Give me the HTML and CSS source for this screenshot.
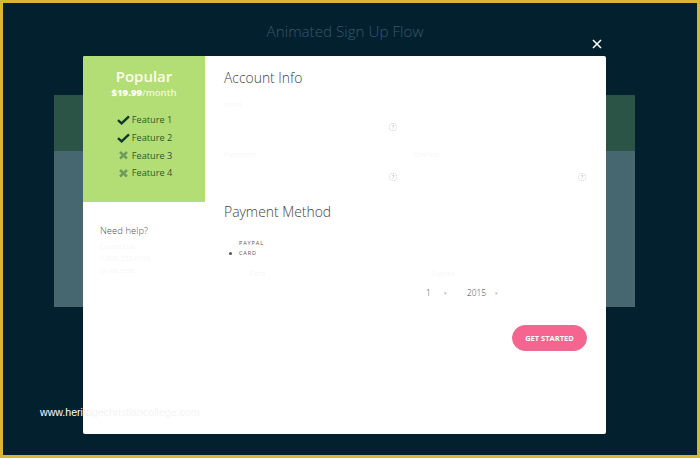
FILE: index.html
```html
<!DOCTYPE html>
<html lang="en">
<head>
<meta charset="utf-8">
<title>Animated Sign Up Flow</title>
<link rel="stylesheet" href="styles.css">
</head>
<body>
<div class="frame">
  <h1 class="page-title">Animated Sign Up Flow</h1>
  <div class="backdrop-card">
    <div class="backdrop-band"></div>
  </div>
  <button class="close" aria-label="Close">
    <svg width="10" height="10" viewBox="0 0 10 10"><path d="M1 1L9 9M9 1L1 9" stroke="#fff" stroke-width="1.6" fill="none"/></svg>
  </button>
  <div class="modal">
    <aside class="side">
      <div class="plan">
        <div class="plan-name">Popular</div>
        <div class="plan-price"><b>$19.99</b>/month</div>
        <ul class="features">
          <li class="feature"><svg class="ico" width="13" height="10" viewBox="0 0 13 10"><path d="M1 5.2L4.6 8.4L12 1.4" stroke="#0f3a2a" stroke-width="2.4" fill="none"/></svg>Feature 1</li>
          <li class="feature"><svg class="ico" width="13" height="10" viewBox="0 0 13 10"><path d="M1 5.2L4.6 8.4L12 1.4" stroke="#0f3a2a" stroke-width="2.4" fill="none"/></svg>Feature 2</li>
          <li class="feature"><svg class="ico" width="13" height="10" viewBox="0 0 13 10"><path d="M3 2L10 8.500M10 2L3 8.500" stroke="#6f9a5c" stroke-width="2.400" fill="none"/></svg>Feature 3</li>
          <li class="feature"><svg class="ico" width="13" height="10" viewBox="0 0 13 10"><path d="M3 2L10 8.500M10 2L3 8.500" stroke="#6f9a5c" stroke-width="2.400" fill="none"/></svg>Feature 4</li>
        </ul>
      </div>
      <div class="help">
        <div class="help-title">Need help?</div>
        <div class="help-lines">
          <div class="help-line">Contact us</div>
          <div class="help-line">1-800-555-0199</div>
          <div class="help-line">or via chat</div>
        </div>
      </div>
    </aside>
    <main class="content">
      <h2 class="section-title">Account Info</h2>
      <div class="fields">
        <div class="row">
          <div class="field"><span class="faint">Email</span><span class="hint">?</span></div>
        </div>
        <div class="row">
          <div class="field"><span class="faint">Password</span><span class="hint">?</span></div>
          <div class="field"><span class="faint">Confirm</span><span class="hint">?</span></div>
        </div>
      </div>
      <h2 class="section-title payment">Payment Method</h2>
      <div class="radios">
        <div class="radio"><span class="dot off"></span>PAYPAL</div>
        <div class="radio"><span class="dot"></span>CARD</div>
      </div>
      <div class="card-row">
        <div class="card-col"><span class="faint">Card</span></div>
        <div class="card-col">
          <span class="faint">Expires</span>
          <div class="selects"><span class="sel sel-month">1<i class="caret">▾</i></span><span class="sel sel-year">2015<i class="caret">▾</i></span></div>
        </div>
      </div>
      <div class="actions"><button class="cta">GET STARTED</button></div>
    </main>
  </div>
  <div class="watermark"><span class="wm-dark">www.heri</span><span class="wm-light">tagechristiancollege.com</span></div>
</div>
</body>
</html>
```
FILE: styles.css
```css
* { box-sizing: border-box; }
html, body { margin: 0; height: 100%; }
body { font-family: "Open Sans", sans-serif; }
.frame {
  position: relative;
  width: 700px;
  height: 458px;
  border: 3px solid #d6b833;
  background: #03202f;
  overflow: hidden;
}
.page-title {
  margin: 18px 0 0;
  text-align: center;
  font-size: 15.200px;
  line-height: 20px;
  font-weight: 300;
  color: #35596a;
  padding-right: 10px;
}
.backdrop-card {
  position: absolute;
  left: 51px;
  top: 92px;
  width: 581px;
  height: 212px;
  background: #466670;
}
.backdrop-band { height: 56px; background: #2b5446; }
.close {
  position: absolute;
  left: 589px;
  top: 36px;
  width: 10px;
  height: 10px;
  padding: 0;
  border: 0;
  background: none;
  display: flex;
}
.modal {
  position: absolute;
  left: 80px;
  top: 53px;
  width: 523px;
  height: 378px;
  background: #fff;
  border-radius: 2px;
  display: flex;
  overflow: hidden;
}
.side { width: 122px; flex: none; }
.plan {
  height: 146px;
  background: #b3de75;
  padding-top: 11px;
  display: flex;
  flex-direction: column;
  align-items: center;
}
.plan-name { font-size: 15px; line-height: 19px; font-weight: 600; color: #fdfde8; }
.plan-price { font-size: 9.500px; line-height: 13px; font-weight: 600; color: #f0f8d8; }
.plan-price b { font-weight: 800; color: #fff; }
.features { list-style: none; margin: 12px 0 0; padding: 0 0 0 1px; }
.feature {
  display: flex;
  align-items: center;
  gap: 2px;
  height: 17.700px;
  font-size: 9.200px;
  color: #2a5a28;
}
.ico { flex: none; }
.help { padding: 22px 0 0 17px; }
.help-title { font-size: 9.500px; line-height: 13px; font-weight: 300; color: #555; }
.help-lines { margin-top: 4px; }
.help-line { font-size: 7px; line-height: 12px; color: #f7f7f7; }
.content { flex: 1; padding: 13px 19px 0 19px; min-width: 0; }
.section-title {
  margin: 0;
  font-size: 13.900px;
  line-height: 18px;
  font-weight: 300;
  color: #444;
}
.section-title.payment { margin-top: 16px; }
.fields { height: 100px; padding-top: 12px; }
.row { display: flex; gap: 16px; height: 50px; }
.field {
  width: 173px;
  position: relative;
  font-size: 7px;
  line-height: 12px;
}
.faint { color: #f7f7f7; font-size: 7px; line-height: 12px; }
.hint {
  position: absolute;
  right: 0;
  top: 24px;
  width: 8px;
  height: 8px;
  border-radius: 50%;
  border: 1px dotted #ccc;
  color: #aaa;
  font-size: 5px;
  line-height: 6px;
  text-align: center;
}
.radios { margin-top: 17px; }
.radio {
  display: flex;
  align-items: center;
  gap: 7px;
  height: 10px;
  font-size: 5.500px;
  letter-spacing: 0.900px;
  color: #555;
}
.dot { width: 3px; height: 3px; border-radius: 50%; background: #555; margin-left: 5px; flex: none; }
.dot.off { background: transparent; }
.card-row { display: flex; margin-top: 1px; height: 40px; }
.card-col { width: 181px; padding-left: 26px; }
.selects {
  display: flex;
  gap: 20px;
  font-size: 8.400px;
  line-height: 12px;
  font-weight: 300;
  color: #444;
  margin-top: 6px;
  margin-left: -5px;
}
.sel { display: flex; justify-content: space-between; }
.sel-month { width: 21px; }
.sel-year { width: 31px; }
.caret { font-style: normal; color: #bbb; font-size: 5px; }
.actions { display: flex; justify-content: flex-end; margin-top: 26px; }
.cta {
  width: 75px;
  height: 26px;
  border: 1px solid #e56f92;
  padding: 0;
  border-radius: 13px;
  background: #f5658f;
  color: #fff;
  font-family: "Open Sans", sans-serif;
  font-size: 7.500px;
  font-weight: 700;
}
.watermark {
  position: absolute;
  left: 37px;
  top: 402px;
  font-family: "Liberation Sans", sans-serif;
  font-size: 10.600px;
  line-height: 14px;
  white-space: nowrap;
}
.wm-dark { color: #fff; }
.wm-light { color: #f4f4f4; }
```
